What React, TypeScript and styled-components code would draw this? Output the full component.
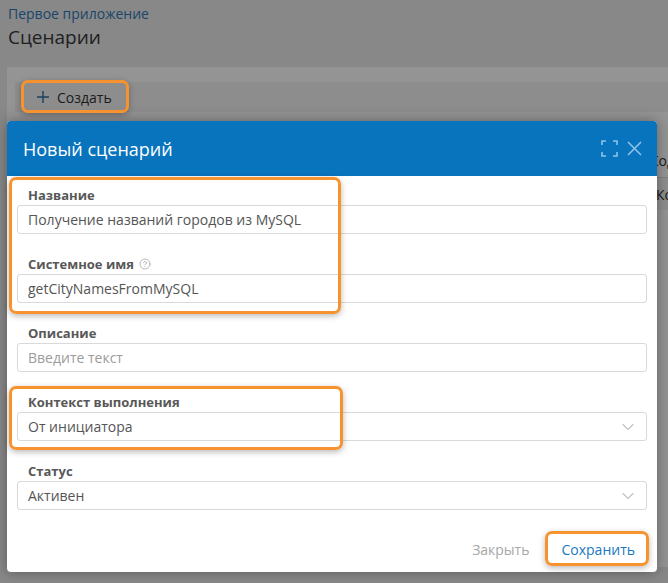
import React from "react";
import styled, { createGlobalStyle } from "styled-components";
import { ChevronDown, CircleHelp } from "lucide-react";

const Global = createGlobalStyle`
  html, body { margin: 0; padding: 0; background: #ebebeb; }
  body { font-family: "Open Sans", "Noto Sans", sans-serif; }
  * { box-sizing: border-box; }
`;

const Screen = styled.div`
  position: relative;
  width: 668px;
  height: 583px;
  overflow: hidden;
  background: #ebebeb;
`;

const Page = styled.div`
  display: flex;
  flex-direction: column;
  padding: 4px 0 0 8px;
`;

const Crumb = styled.a`
  font-size: 14px;
  line-height: 20px;
  color: #2f78b8;
  text-decoration: none;
`;

const Title = styled.h1`
  margin: 0;
  font-size: 19px;
  line-height: 26px;
  font-weight: 400;
  color: #383838;
`;

const Card = styled.div`
  margin: 17px 0 0 -1px;
  background: #fff;
  padding: 15px 0 0 0;
  height: 500px;
  display: flex;
  flex-direction: column;
`;

const Toolbar = styled.div`
  height: 30px;
  margin: 0 0 0 8px;
  background: #f3f3f3;
  display: flex;
  align-items: center;
  padding-left: 22px;
`;

const ToolButton = styled.button`
  border: none;
  background: transparent;
  display: flex;
  align-items: center;
  gap: 8px;
  font-family: inherit;
  font-size: 14px;
  color: #333;
  padding: 0;
  svg { color: #2f6f9f; display: block; }
`;

const Table = styled.div`
  margin-top: 32px;
  display: grid;
  grid-template-columns: 330px 301px 200px;
`;

const HeadCell = styled.div`
  height: 34px;
  display: flex;
  align-items: center;
  padding-left: 12px;
  font-size: 14px;
  color: #333;
  background: #fff;
  border-bottom: 1px solid #ddd;
  white-space: nowrap;
`;

const RowCell = styled.div<{ $pad?: number }>`
  height: 32px;
  display: flex;
  align-items: center;
  padding-left: ${(p) => p.$pad ?? 12}px;
  font-size: 14px;
  color: #333;
  background: #f4f4f4;
  white-space: nowrap;
`;

const Overlay = styled.div`
  position: absolute;
  inset: 0;
  background: rgba(0, 0, 0, 0.42);
`;

const Modal = styled.div`
  position: absolute;
  left: 7px;
  top: 121px;
  width: 650px;
  height: 451px;
  background: #fff;
  border-radius: 4px;
  box-shadow: 0 0 14px rgba(0, 0, 0, 0.35);
  display: flex;
  flex-direction: column;
  overflow: hidden;
`;

const Header = styled.div`
  height: 55px;
  flex: none;
  background: #0874be;
  display: flex;
  align-items: center;
  padding: 0 15px 0 16px;
`;

const ModalTitle = styled.div`
  flex: 1;
  font-size: 18px;
  color: #fff;
  line-height: 24px;
`;

const HeaderIcons = styled.div`
  display: flex;
  align-items: center;
  gap: 9px;
  color: #8dc3ea;
  svg { display: block; }
`;

const Body = styled.div`
  display: flex;
  flex-direction: column;
  gap: 21px;
  padding: 10px 10px 0;
`;

const Field = styled.div`
  display: flex;
  flex-direction: column;
`;

const Label = styled.div`
  font-size: 13px;
  line-height: 18px;
  font-weight: 700;
  color: #585858;
  padding-left: 11px;
  margin-bottom: 1px;
  display: flex;
  align-items: center;
  gap: 5px;
  svg { color: #9a9a9a; }
`;

const InputBox = styled.div<{ $placeholder?: boolean }>`
  height: 29px;
  border: 1px solid #d9d9d9;
  border-radius: 3px;
  display: flex;
  align-items: center;
  padding: 0 8px 0 10px;
  font-size: 14px;
  color: ${(p) => (p.$placeholder ? "#9b9b9b" : "#555")};
  svg { margin-left: auto; color: #8a8a8a; }
`;

const Footer = styled.div`
  margin-top: auto;
  display: flex;
  justify-content: flex-end;
  align-items: center;
  gap: 8px;
  padding: 0 10px 7px;
`;

const FooterButton = styled.button<{ $primary?: boolean }>`
  height: 32px;
  border: none;
  background: transparent;
  padding: 0 12px;
  font-family: inherit;
  font-size: 14px;
  color: ${(p) => (p.$primary ? "#1a78c2" : "#a8a8a8")};
`;

const Mark = styled.div`
  position: absolute;
  border: 3px solid #f7932f;
  border-radius: 7px;
  box-shadow: 0 2px 6px rgba(0, 0, 0, 0.28);
  pointer-events: none;
`;

const PlusIcon = () => (
  <svg width="12" height="12" viewBox="0 0 12 12" fill="none" stroke="currentColor" strokeWidth="1.4">
    <path d="M6 0v12M0 6h12" />
  </svg>
);

const FullscreenIcon = () => (
  <svg width="17" height="17" viewBox="0 0 17 17" fill="none" stroke="currentColor" strokeWidth="1.6">
    <path d="M1 5V1h4M12 1h4v4M16 12v4h-4M5 16H1v-4" />
  </svg>
);

const CloseIcon = () => (
  <svg width="15" height="15" viewBox="0 0 15 15" fill="none" stroke="currentColor" strokeWidth="1.6">
    <path d="M1 1l13 13M14 1L1 14" />
  </svg>
);

export default function App() {
  return (
    <Screen>
      <Global />
      <Page>
        <Crumb href="#">Первое приложение</Crumb>
        <Title>Сценарии</Title>
        <Card>
          <Toolbar>
            <ToolButton>
              <PlusIcon />
              Создать
            </ToolButton>
          </Toolbar>
          <Table>
            <HeadCell />
            <HeadCell />
            <HeadCell>Код</HeadCell>
            <RowCell />
            <RowCell />
            <RowCell $pad={18}>Код</RowCell>
          </Table>
        </Card>
      </Page>
      <Overlay />
      <Modal>
        <Header>
          <ModalTitle>Новый сценарий</ModalTitle>
          <HeaderIcons>
            <FullscreenIcon />
            <CloseIcon />
          </HeaderIcons>
        </Header>
        <Body>
          <Field>
            <Label>Название</Label>
            <InputBox>Получение названий городов из MySQL</InputBox>
          </Field>
          <Field>
            <Label>
              Системное имя
              <CircleHelp size={12} strokeWidth={1.4} />
            </Label>
            <InputBox>getCityNamesFromMySQL</InputBox>
          </Field>
          <Field>
            <Label>Описание</Label>
            <InputBox $placeholder>Введите текст</InputBox>
          </Field>
          <Field>
            <Label>Контекст выполнения</Label>
            <InputBox>
              От инициатора
              <ChevronDown size={20} strokeWidth={1.1} />
            </InputBox>
          </Field>
          <Field>
            <Label>Статус</Label>
            <InputBox>
              Активен
              <ChevronDown size={20} strokeWidth={1.1} />
            </InputBox>
          </Field>
        </Body>
        <Footer>
          <FooterButton>Закрыть</FooterButton>
          <FooterButton $primary>Сохранить</FooterButton>
        </Footer>
      </Modal>
      <Mark style={{ left: 21, top: 80, width: 108, height: 33 }} />
      <Mark style={{ left: 9, top: 177, width: 332, height: 137 }} />
      <Mark style={{ left: 9, top: 386, width: 334, height: 64 }} />
      <Mark style={{ left: 545, top: 531, width: 104, height: 35 }} />
    </Screen>
  );
}
